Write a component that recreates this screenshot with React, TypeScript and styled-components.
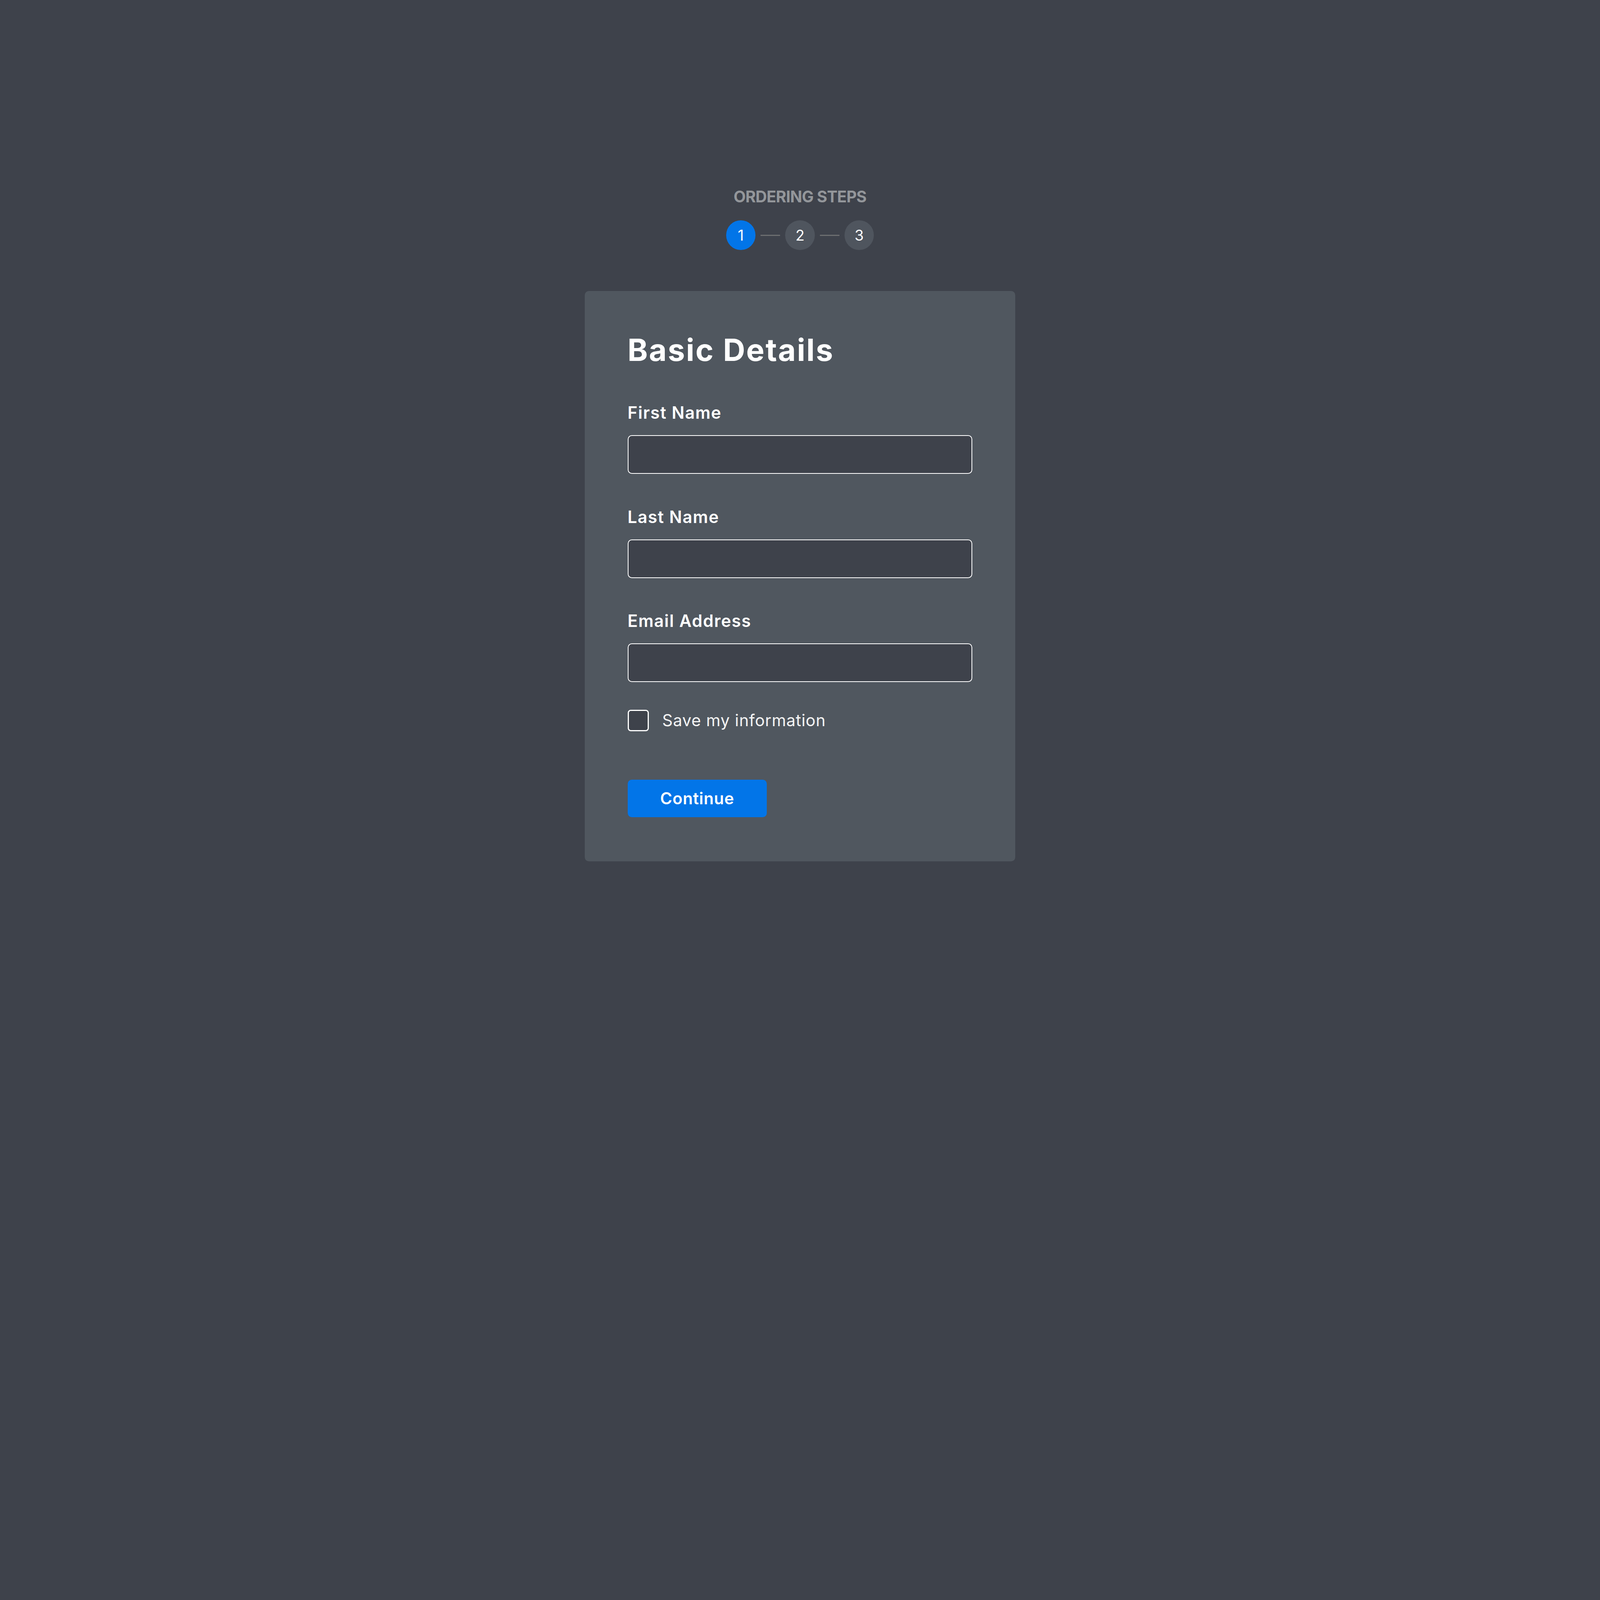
import styled, { createGlobalStyle } from 'styled-components';

// the layout is written for a 1568 x 1027 page and zoomed to the real viewport width
const DESIGN_WIDTH = 1568;

const steps = [1, 2, 3];
const activeStep = 1;

const fields = [
  { id: 'first-name', label: 'First Name', type: 'text' },
  { id: 'last-name', label: 'Last Name', type: 'text' },
  { id: 'email', label: 'Email Address', type: 'email' },
];

export default function App() {
  const zoom = window.innerWidth / DESIGN_WIDTH;

  return (
    <>
      <GlobalStyle />
      <StyledPage style={{ zoom }}>
        <StyledStepsTitle>ORDERING STEPS</StyledStepsTitle>
        <StyledSteps>
          {steps.map((step, i) => (
            <StyledStepItem key={step}>
              {i > 0 && <StyledStepLine />}
              <StyledStep $active={step === activeStep}>{step}</StyledStep>
            </StyledStepItem>
          ))}
        </StyledSteps>

        <StyledCard>
          <StyledTitle>Basic Details</StyledTitle>
          <StyledFields>
            {fields.map((field) => (
              <StyledField key={field.id}>
                <StyledLabel htmlFor={field.id}>{field.label}</StyledLabel>
                <StyledInput id={field.id} type={field.type} />
              </StyledField>
            ))}
          </StyledFields>

          <StyledCheckRow>
            <StyledCheckbox id='save-info' type='checkbox' />
            <StyledCheckLabel htmlFor='save-info'>Save my information</StyledCheckLabel>
          </StyledCheckRow>

          <StyledButton type='button'>Continue</StyledButton>
        </StyledCard>
      </StyledPage>
    </>
  );
}

const GlobalStyle = createGlobalStyle`
  html, body {
    margin: 0;
    padding: 0;
    background: #3e424b;
  }
  * {
    box-sizing: border-box;
  }
  body {
    font-family: Inter, 'Open Sans', sans-serif;
  }
`;

const StyledPage = styled.main`
  height: 1027px;
  display: flex;
  flex-direction: column;
  align-items: center;
  justify-content: center;
  color: #ffffff;
`;

const StyledStepsTitle = styled.h2`
  margin: 0;
  font-size: 15.5px;
  line-height: 20px;
  font-weight: 700;
  letter-spacing: -0.3px;
  color: #93969a;
`;

const StyledSteps = styled.div`
  display: flex;
  align-items: center;
  margin-top: 13px;
`;

const StyledStepItem = styled.div`
  display: flex;
  align-items: center;
`;

const StyledStepLine = styled.span`
  width: 19px;
  height: 1px;
  margin: 0 5px;
  background: #6d6e70;
`;

const StyledStep = styled.span<{ $active?: boolean }>`
  width: 29px;
  height: 29px;
  border-radius: 50%;
  display: flex;
  align-items: center;
  justify-content: center;
  font-size: 14.5px;
  font-weight: 400;
  color: #ffffff;
  background: ${({ $active }) => ($active ? '#0275e8' : '#4f555e')};
`;

const StyledCard = styled.section`
  width: 422px;
  margin-top: 40px;
  padding: 40px 42px 43px;
  border-radius: 4px;
  background: #50575f;
  display: flex;
  flex-direction: column;
  align-items: flex-start;
`;

const StyledTitle = styled.h1`
  margin: 0;
  font-size: 30px;
  line-height: 36px;
  font-weight: 700;
  letter-spacing: 1.1px;
`;

const StyledFields = styled.div`
  width: 100%;
  margin-top: 31.5px;
  display: flex;
  flex-direction: column;
  gap: 30px;
`;

const StyledField = styled.div`
  display: flex;
  flex-direction: column;
  gap: 10px;
`;

const StyledLabel = styled.label`
  font-size: 16.5px;
  line-height: 24px;
  font-weight: 600;
  letter-spacing: 0.6px;
`;

const StyledInput = styled.input`
  width: 100%;
  height: 38px;
  padding: 0 10px;
  border: 1px solid #ffffff;
  border-radius: 4px;
  background: #3e424b;
  color: #ffffff;
  font: inherit;
  font-size: 15px;
  outline: none;
`;

const StyledCheckRow = styled.div`
  display: flex;
  align-items: center;
  gap: 13px;
  margin-top: 25.5px;
`;

const StyledCheckbox = styled.input`
  appearance: none;
  margin: 0;
  width: 21px;
  height: 21px;
  border: 1.5px solid #ffffff;
  border-radius: 3px;
  background: #3e424b;
  cursor: pointer;
`;

const StyledCheckLabel = styled.label`
  font-size: 16px;
  line-height: 24px;
  font-weight: 400;
  letter-spacing: 0.3px;
  color: #f4f4f4;
  cursor: pointer;
`;

const StyledButton = styled.button`
  margin-top: 46px;
  height: 37px;
  padding: 0 32px;
  border: none;
  border-radius: 4px;
  background: #0275e8;
  color: #ffffff;
  font-family: inherit;
  font-size: 16px;
  font-weight: 600;
  letter-spacing: 0.3px;
  cursor: pointer;
`;
